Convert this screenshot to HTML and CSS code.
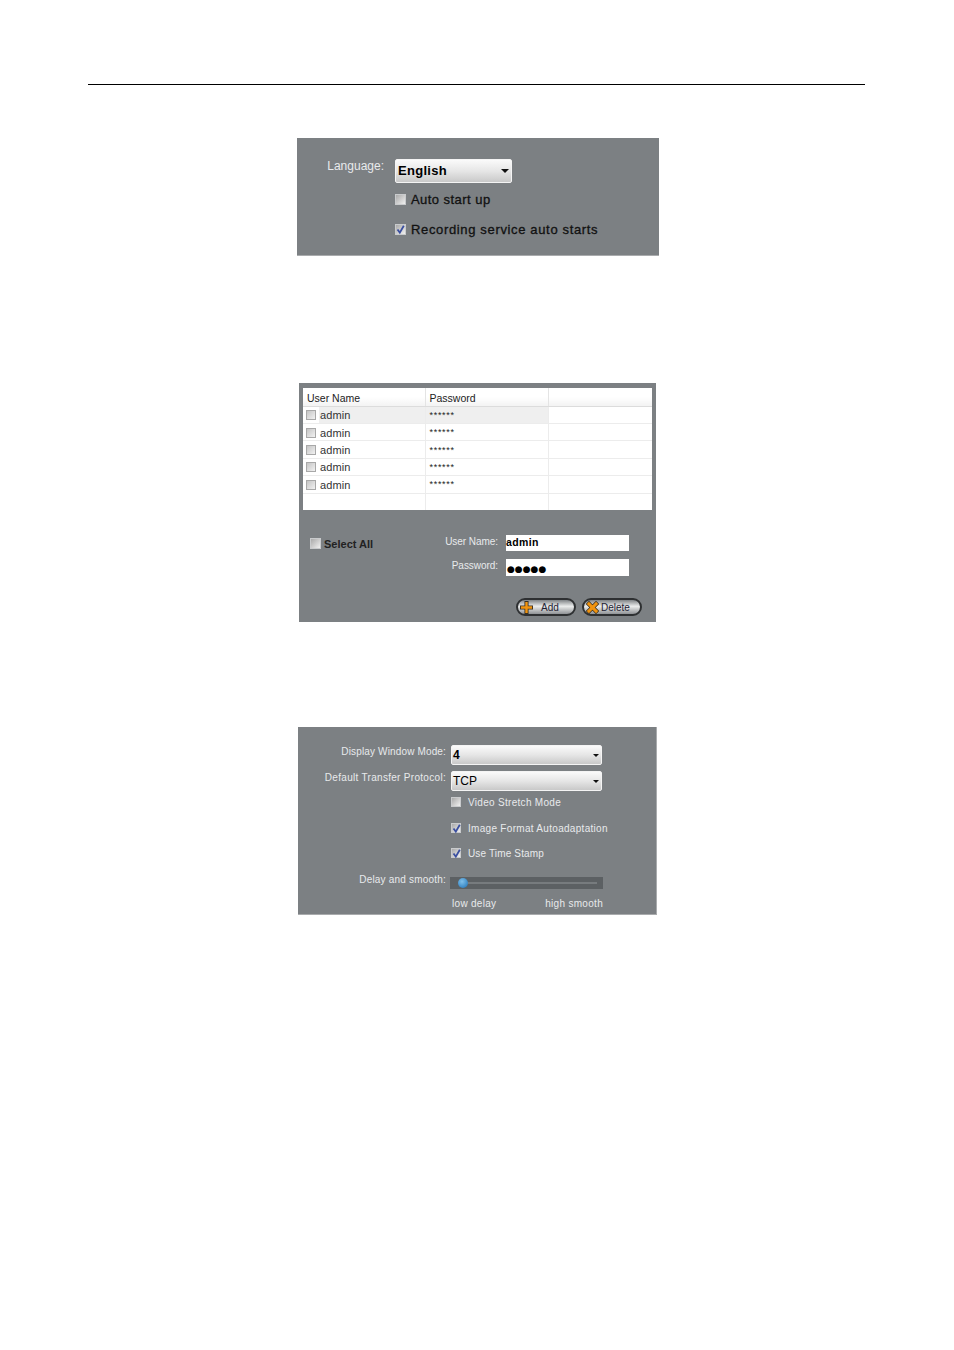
FILE: index.html
```html
<!DOCTYPE html>
<html lang="en">
<head>
    <meta charset="UTF-8">
    <title>Client settings</title>
    <link rel="stylesheet" href="styles.css">
</head>
<body>
    <div class="rule"></div>

    <!-- general -->
    <section class="panel panel-general">
        <div class="form-row">
            <span class="label">Language:</span>
            <div class="select select-lang"><span>English</span><i class="arrow"></i></div>
        </div>
        <label class="check check-first"><span class="box"></span><span>Auto start up</span></label>
        <label class="check check-second">
            <span class="box"><svg viewBox="0 0 11 11"><path d="M2.5 5.5 L4.8 8.6 L8.8 1.8" fill="none" stroke="#3a4fa0" stroke-width="1.8"/></svg></span>
            <span>Recording service auto starts</span>
        </label>
    </section>

    <!-- users -->
    <section class="panel panel-users">
        <table class="users">
            <thead>
                <tr><th>User Name</th><th>Password</th><th></th></tr>
            </thead>
            <tbody>
                <tr class="selected"><td><span class="box"></span><span class="name">admin</span></td><td class="stars">******</td><td></td></tr>
                <tr><td><span class="box"></span><span class="name">admin</span></td><td class="stars">******</td><td></td></tr>
                <tr><td><span class="box"></span><span class="name">admin</span></td><td class="stars">******</td><td></td></tr>
                <tr><td><span class="box"></span><span class="name">admin</span></td><td class="stars">******</td><td></td></tr>
                <tr><td><span class="box"></span><span class="name">admin</span></td><td class="stars">******</td><td></td></tr>
                <tr><td></td><td></td><td></td></tr>
            </tbody>
        </table>
        <div class="user-form">
            <label class="select-all"><span class="box"></span><span>Select All</span></label>
            <div class="fields">
                <div class="field"><span class="label">User Name:</span><div class="input">admin</div></div>
                <div class="field"><span class="label">Password:</span><div class="input input-pass">●●●●●</div></div>
            </div>
        </div>
        <div class="buttons">
            <div class="btn">
                <svg viewBox="0 0 14 14">
                    <path d="M7 0 V14 M0 7 H14" stroke="#3a3020" stroke-width="4.4"/>
                    <path d="M7 1 V13 M1 7 H13" stroke="#f0930f" stroke-width="2.6"/>
                </svg>
                <span class="btn-add">Add</span>
            </div>
            <div class="btn">
                <svg viewBox="0 0 14 14">
                    <path d="M1.5 1.5 L12.5 12.5 M12.5 1.5 L1.5 12.5" stroke="#3a3020" stroke-width="4.8"/>
                    <path d="M2 2 L12 12 M12 2 L2 12" stroke="#f0930f" stroke-width="3.2"/>
                </svg>
                <span>Delete</span>
            </div>
        </div>
    </section>

    <!-- display -->
    <section class="panel panel-display">
        <div class="form-row row-mode">
            <span class="label">Display Window Mode:</span>
            <div class="select select-wide"><span class="val-mode">4</span><i class="arrow"></i></div>
        </div>
        <div class="form-row row-proto">
            <span class="label">Default Transfer Protocol:</span>
            <div class="select select-wide"><span>TCP</span><i class="arrow"></i></div>
        </div>
        <label class="opt opt-first"><span class="box"></span><span>Video Stretch Mode</span></label>
        <label class="opt">
            <span class="box"><svg viewBox="0 0 11 11"><path d="M2.5 5.5 L4.8 8.6 L8.8 1.8" fill="none" stroke="#3a4fa0" stroke-width="1.8"/></svg></span>
            <span>Image Format Autoadaptation</span>
        </label>
        <label class="opt">
            <span class="box"><svg viewBox="0 0 11 11"><path d="M2.5 5.5 L4.8 8.6 L8.8 1.8" fill="none" stroke="#3a4fa0" stroke-width="1.8"/></svg></span>
            <span class="stamp">Use Time Stamp</span>
        </label>
        <div class="form-row row-slider">
            <span class="label">Delay and smooth:</span>
            <div class="slider"><div class="slider-line"></div><div class="thumb"></div></div>
        </div>
        <div class="slider-ends"><span>low delay</span><span>high smooth</span></div>
    </section>
</body>
</html>
```

FILE: styles.css
```css
body {
    margin: 0;
    background: #fff;
    font-family: "Liberation Sans", Arial, sans-serif;
    font-size: 12px;
    color: #111;
}

.rule {
    margin: 84px 89px 0 88px;
    border-top: 1px solid #000;
}

.panel {
    box-sizing: border-box;
    background: #7c8083;
    overflow: hidden;
}

.label {
    color: #e8eaec;
    text-align: right;
    flex: none;
}

.form-row {
    display: flex;
}

/* checkbox */
.box {
    display: inline-block;
    box-sizing: border-box;
    width: 11px;
    height: 11px;
    flex: none;
    border: 1px solid #c9cbcd;
    background: linear-gradient(135deg, #a9a9a9, #f0f0f0);
}

.box svg {
    display: block;
    width: 11px;
    height: 11px;
    margin: -1px;
}

/* dropdown */
.select {
    box-sizing: border-box;
    display: flex;
    align-items: center;
    justify-content: space-between;
    border: 1px solid #f4f4f4;
    border-radius: 2px;
    background: linear-gradient(#fafafa, #e6e6e6 50%, #c9c9c9);
    color: #000;
}

.arrow {
    width: 0;
    height: 0;
    border-left: 4px solid transparent;
    border-right: 4px solid transparent;
    border-top: 4px solid #111;
}

/* general panel */
.panel-general {
    width: 362px;
    height: 118px;
    margin: 53px 0 0 297px;
    padding-top: 21px;
    border-bottom: 1px solid #a9abad;
}

.panel-general .label {
    width: 87px;
    margin-right: 11px;
    font-size: 12px;
    line-height: 14px;
}

.select-lang {
    width: 117px;
    height: 24px;
    padding: 0 2px 2px 2px;
    font-size: 13px;
    font-weight: bold;
    letter-spacing: 0.3px;
}

.select-lang .arrow {
    margin-top: 2px;
}

.check {
    display: flex;
    align-items: center;
    gap: 5px;
    margin-left: 98px;
    height: 14px;
    font-size: 13px;
    letter-spacing: 0.65px;
    -webkit-text-stroke: 0.3px #111;
}

.check-first {
    margin-top: 9px;
    letter-spacing: 0.45px;
}

.check-second {
    margin-top: 16px;
}

/* users panel */
.panel-users {
    width: 357px;
    height: 239px;
    margin: 127px 0 0 299px;
    padding: 5px 4px 0;
}

.users {
    width: 349px;
    height: 122px;
    background: #fff;
    border-collapse: collapse;
    table-layout: fixed;
}

.users th {
    height: 18px;
    padding: 2px 0 0 4px;
    box-sizing: border-box;
    text-align: left;
    font-weight: normal;
    font-size: 10.5px;
    color: #222;
    background: linear-gradient(#fff 50%, #f3f3f3);
    border-right: 1px solid #e4e4e4;
    border-bottom: 1px solid #dcdcdc;
}

.users th:first-child {
    width: 122px;
}

.users th:nth-child(2) {
    width: 123px;
}

.users th:last-child,
.users td:last-child {
    border-right: 0;
}

.users td {
    height: 16px;
    padding: 0 0 0 4px;
    font-size: 11px;
    color: #333;
    border-right: 1px solid #ececec;
    border-bottom: 1px solid #ececec;
    white-space: nowrap;
}

.users td:first-child {
    padding-left: 3px;
}

.users tr:last-child td {
    border-bottom: 0;
}

.users .box {
    vertical-align: middle;
    width: 10px;
    height: 10px;
    border-color: #a8a8a8;
    background: linear-gradient(135deg, #c4c4c4, #f2f2f2);
}

.users .name {
    display: inline-block;
    margin-left: 4px;
    letter-spacing: 0.1px;
    vertical-align: middle;
}

.users .stars {
    font-size: 9px;
    color: #222;
    letter-spacing: 0.7px;
}

.users .selected td:nth-child(2) {
    background: #efefef;
}

.users .selected td:first-child {
    background: linear-gradient(90deg, #fff 16px, #efefef 16px);
}

.user-form {
    display: flex;
    justify-content: space-between;
    margin: 25px 0 0 7px;
    width: 319px;
}

.select-all {
    display: flex;
    align-items: center;
    gap: 3px;
    height: 11px;
    margin-top: 3px;
    font-size: 11px;
    font-weight: bold;
    color: #222;
}

.fields {
    display: flex;
    flex-direction: column;
    gap: 8px;
}

.field {
    display: flex;
    gap: 8px;
}

.field .label {
    width: 70px;
    font-size: 10px;
    letter-spacing: -0.05px;
    line-height: 13px;
}

.input {
    box-sizing: border-box;
    width: 123px;
    height: 16px;
    background: #fff;
    color: #000;
    font-size: 10.5px;
    font-weight: bold;
    letter-spacing: 0.4px;
    line-height: 14px;
}

.input-pass {
    height: 17px;
    padding-left: 1px;
    font-family: "DejaVu Sans", sans-serif;
    font-size: 9px;
    font-weight: normal;
    letter-spacing: 0;
    line-height: 21px;
}

.buttons {
    display: flex;
    gap: 6px;
    justify-content: flex-end;
    margin: 22px 10px 0 0;
}

.btn {
    box-sizing: border-box;
    display: flex;
    align-items: center;
    gap: 2px;
    width: 60px;
    height: 18px;
    padding-left: 2px;
    border: 2px solid #2e3032;
    border-radius: 9px;
    background: linear-gradient(#7f8386, #eceded 45%, #8f9295);
    font-size: 10px;
    color: #223;
}

.btn svg {
    width: 13px;
    height: 13px;
    flex: none;
}

.btn-add {
    margin-left: 6px;
}

/* display panel */
.panel-display {
    width: 359px;
    height: 188px;
    margin: 105px 0 0 298px;
    padding-top: 18px;
    border-right: 1px solid #a9abad;
    border-bottom: 1px solid #a9abad;
}

.panel-display .label {
    width: 148px;
    margin-right: 5px;
    font-size: 10px;
    letter-spacing: 0.2px;
    line-height: 13px;
}

.panel-display .row-mode .label {
    letter-spacing: 0.15px;
}

.panel-display .row-proto .label {
    letter-spacing: 0.3px;
}

.select-wide {
    width: 151px;
    height: 20px;
    padding: 0 2px 0 1px;
    font-size: 12px;
}

.select-wide .arrow {
    border-left-width: 3.5px;
    border-right-width: 3.5px;
    border-top-width: 3.5px;
}

.val-mode {
    font-weight: bold;
}

.row-proto {
    margin-top: 6px;
}

.opt {
    display: flex;
    align-items: center;
    gap: 7px;
    margin: 16px 0 0 153px;
    height: 10px;
    font-size: 10px;
    letter-spacing: 0.3px;
    color: #e8eaec;
}

.opt + .opt + .opt {
    margin-top: 15px;
}

.opt-first {
    margin-top: 6px;
}

.opt .box {
    width: 10px;
    height: 10px;
}

.stamp {
    letter-spacing: 0.15px;
}

.row-slider {
    margin-top: 15px;
}

.slider {
    position: relative;
    box-sizing: border-box;
    width: 153px;
    height: 12px;
    margin: 4px 0 0 -1px;
    padding: 5px 6px 0 10px;
    background: #5c6063;
}

.slider-line {
    height: 2px;
    background: #777b7e;
}

.thumb {
    position: absolute;
    left: 8px;
    top: 1px;
    width: 10px;
    height: 10px;
    border-radius: 50%;
    background: radial-gradient(circle at 40% 35%, #7fc0ea, #1b6fb5);
}

.slider-ends {
    display: flex;
    justify-content: space-between;
    width: 151px;
    margin: 9px 0 0 154px;
    font-size: 10px;
    letter-spacing: 0.3px;
    color: #e8eaec;
}
```
